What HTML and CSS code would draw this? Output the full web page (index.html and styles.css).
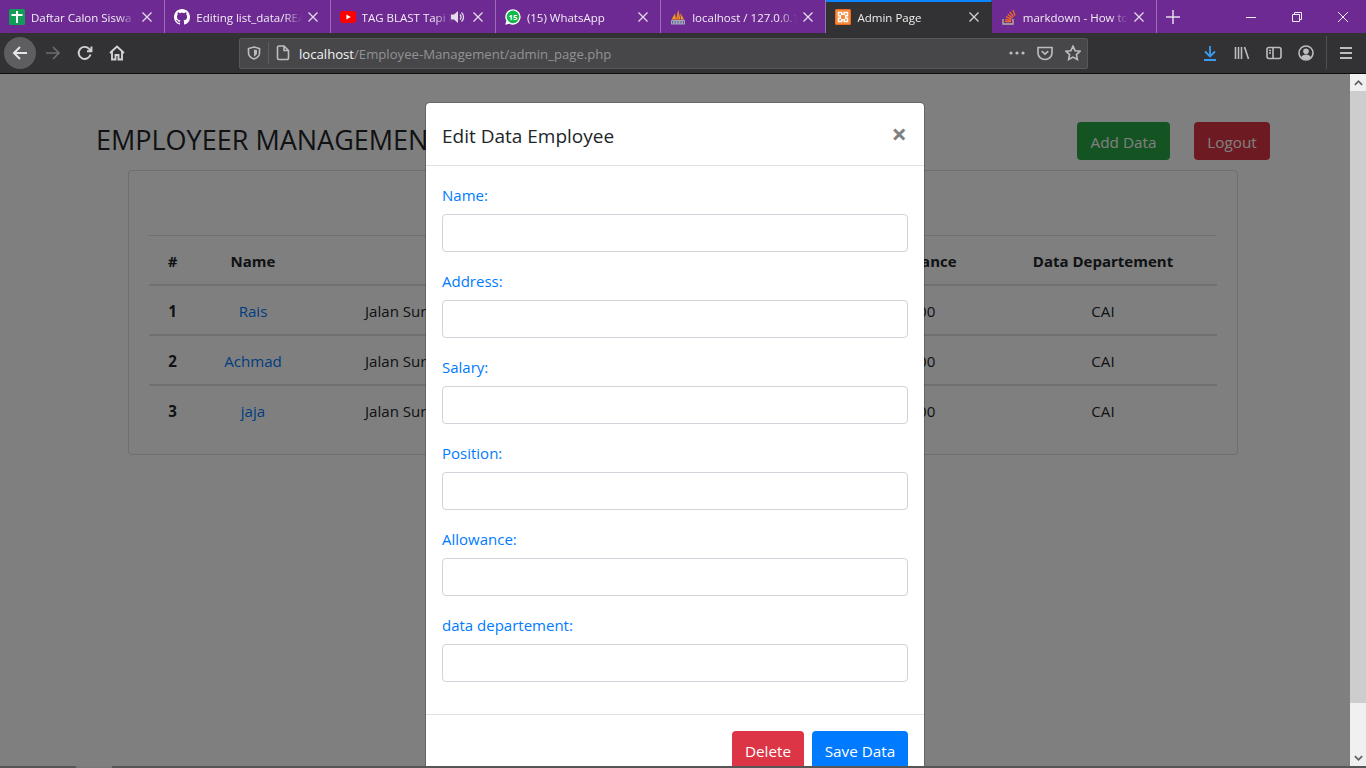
FILE: index.html
```html
<!DOCTYPE html>
<html lang="en">
<head>
<meta charset="utf-8">
<title>Admin Page</title>
<link rel="stylesheet" href="styles.css">
</head>
<body>
<div class="window">
  <div class="tabbar">
    <div class="tab">
      <svg class="fav" viewBox="0 0 16 16"><rect width="16" height="16" rx="1.5" fill="#0f9d58"/><path d="M2.500 5h11v2H9v7H7V7H2.500zM7 2h2v3H7z" fill="#fff"/></svg>
      <span class="title">Daftar Calon Siswa Man</span>
      <svg class="close" viewBox="0 0 10 10"><path d="M.5.5l9 9M9.5.5l-9 9"/></svg>
    </div>
    <div class="tab">
      <svg class="fav" viewBox="0 0 16 16"><path fill="#fff" d="M8 0C3.58 0 0 3.58 0 8c0 3.54 2.29 6.53 5.47 7.59.4.07.55-.17.55-.38v-1.49c-2.01.37-2.53-.49-2.69-.94-.09-.23-.48-.94-.82-1.13-.28-.15-.68-.52-.01-.53.63-.01 1.08.58 1.23.82.72 1.21 1.87.87 2.33.66.07-.52.28-.87.51-1.07-1.78-.2-3.64-.89-3.64-3.95 0-.87.31-1.59.82-2.15-.08-.2-.36-1.02.08-2.12 0 0 .67-.21 2.2.82.64-.18 1.32-.27 2-.27s1.36.09 2 .27c1.53-1.04 2.2-.82 2.2-.82.44 1.1.16 1.92.08 2.12.51.56.82 1.27.82 2.15 0 3.07-1.87 3.75-3.65 3.95.29.25.54.73.54 1.48v2.2c0 .21.15.46.55.38A8.01 8.01 0 0 0 16 8c0-4.42-3.58-8-8-8z"/></svg>
      <span class="title">Editing list_data/README</span>
      <svg class="close" viewBox="0 0 10 10"><path d="M.5.5l9 9M9.5.5l-9 9"/></svg>
    </div>
    <div class="tab">
      <svg class="fav" viewBox="0 0 16 16"><rect y="2" width="16" height="12" rx="3" fill="#f00"/><path d="M6.4 5.4v5.2L10.8 8z" fill="#fff"/></svg>
      <span class="title">TAG BLAST Tapi Lagu</span>
      <svg class="sound" viewBox="0 0 14 14"><path d="M0 4.5h3L7 1v12L3 9.5H0z" fill="#e4dcea"/><path d="M9 4.5a3.5 3.5 0 0 1 0 5M10.5 2.5a6 6 0 0 1 0 9" fill="none" stroke="#e4dcea" stroke-width="1.3"/></svg>
      <svg class="close" viewBox="0 0 10 10"><path d="M.5.5l9 9M9.5.5l-9 9"/></svg>
    </div>
    <div class="tab">
      <svg class="fav" viewBox="0 0 16 16"><path d="M8 .2a7.700 7.700 0 0 0-6.600 11.600L.2 15.800l4.100-1.100A7.700 7.700 0 1 0 8 .2z" fill="#fff"/><circle cx="8" cy="7.900" r="6.300" fill="#12b84a"/><text x="8" y="10.500" class="wa">15</text></svg>
      <span class="title">(15) WhatsApp</span>
      <svg class="close" viewBox="0 0 10 10"><path d="M.5.5l9 9M9.5.5l-9 9"/></svg>
    </div>
    <div class="tab">
      <svg class="fav" viewBox="0 0 16 16"><path d="M1.500 10.500L5 4.500l1 6zM6 10.500L8.200 1l2.300 9.500zM11 10.500l-.8-6.500 4 6.500z" fill="#f59a1d"/><path d="M8.200 3.500l.9 7H7.400z" fill="#d8641a"/><rect x="1" y="11" width="14" height="4.500" rx=".5" fill="#a3a6c0"/><path d="M2.500 12v2.500M5 12v2.500M8 12v2.500M11 12v2.500M13.500 12v2.500" stroke="#5d5f80" stroke-width="1"/></svg>
      <span class="title">localhost / 127.0.0.1 / db</span>
      <svg class="close" viewBox="0 0 10 10"><path d="M.5.5l9 9M9.5.5l-9 9"/></svg>
    </div>
    <div class="tab tab-active">
      <svg class="fav" viewBox="0 0 16 16"><rect width="16" height="16" rx="1.500" fill="#ef6c1e"/><rect x="1" y="1" width="14" height="14" fill="#f58a3c"/><path d="M3.500 3.500h3.200v1.800h2.600V3.500h3.200v3.200H10.700v2.600h1.800v3.200H9.300v-1.800H6.700v1.800H3.500V9.300h1.800V6.700H3.500z" fill="none" stroke="#fff" stroke-width="1.500"/></svg>
      <span class="title">Admin Page</span>
      <svg class="close" viewBox="0 0 10 10"><path d="M.5.5l9 9M9.500.5l-9 9"/></svg>
    </div>
    <div class="tab">
      <svg class="fav" viewBox="0 0 16 16"><path d="M2 10v5h10v-5" fill="none" stroke="#b5b5a8" stroke-width="1.300"/><path d="M4 12.500h6M4.200 10.300l5.900 1.100M5 7.700l5.500 2.500M6.700 5.200l4.700 3.900M9 3l3.500 4.900M12 1l2 5.800" fill="none" stroke="#ef6a21" stroke-width="1.300"/></svg>
      <span class="title">markdown - How to</span>
      <svg class="close" viewBox="0 0 10 10"><path d="M.5.5l9 9M9.5.5l-9 9"/></svg>
    </div>
    <svg class="newtab" viewBox="0 0 14 14"><path d="M7 0v14M0 7h14"/></svg>
    <div class="winctl">
      <div class="winbtn"><svg viewBox="0 0 10 10"><path d="M0 5.500h10"/></svg></div>
      <div class="winbtn"><svg viewBox="0 0 10 10"><path d="M.5 2.500h7v7h-7zM2.500 2.500v-2h7v7h-2"/></svg></div>
      <div class="winbtn"><svg viewBox="0 0 10 10"><path d="M0 0l10 10M10 0L0 10"/></svg></div>
    </div>
  </div>

  <div class="toolbar">
    <div class="backbtn"><svg class="ico" viewBox="0 0 16 16"><path class="line-strong" d="M15 8H2M8 2L2 8l6 6"/></svg></div>
    <div class="tbtn"><svg class="ico" viewBox="0 0 16 16"><path class="line-dim" d="M1 8h13M8 2l6 6-6 6"/></svg></div>
    <div class="tbtn"><svg class="ico" viewBox="0 0 16 16"><path class="line-bold" d="M13.500 9.500A6 6 0 1 1 12 3.700L14 6M14.500 1.500V6.300H10"/></svg></div>
    <div class="tbtn"><svg class="ico" viewBox="0 0 16 16"><path class="line-bold" d="M1 8l7-6.500L15 8M3 6.500V14.500h3.500V10h3v4.500H13V6.500"/></svg></div>
    <div class="urlbar">
      <svg class="ico-sm" viewBox="0 0 14 14"><path class="line" d="M7 1l5.500 1.500V7c0 3-2.500 5-5.500 6-3-1-5.500-3-5.500-6V2.500z"/><path d="M7 3.500l3 .8V7c0 1.500-1.300 2.800-3 3.500z" fill="#bdbdbf"/></svg>
      <span class="urlsep"></span>
      <svg class="ico-page" viewBox="0 0 14 16"><path class="line" d="M1.500 2.500a1.500 1.500 0 0 1 1.500-1.500h5l4.500 4.500V13a1.500 1.500 0 0 1-1.500 1.500H3A1.500 1.500 0 0 1 1.500 13zM8 1v4.500h4.500"/></svg>
      <span class="url"><span class="url-host">localhost</span>/Employee-Management/admin_page.php</span>
      <svg class="dots" viewBox="0 0 16 4"><circle cx="2" cy="2" r="1.600"/><circle cx="8" cy="2" r="1.600"/><circle cx="14" cy="2" r="1.600"/></svg>
      <svg class="ico pocket" viewBox="0 0 16 16"><path class="line" d="M1 2.500h14V8a7 6.500 0 0 1-14 0z"/><path class="line" d="M4.800 6.200L8 9.200l3.200-3"/></svg>
      <svg class="ico star" viewBox="0 0 16 16"><path class="line" d="M8 1.200l2.100 4.500 4.900.6-3.600 3.300 1 4.900L8 12.100l-4.400 2.400 1-4.900L1 6.300l4.900-.6z"/></svg>
    </div>
    <div class="tbtn tbtn-first"><svg class="ico" viewBox="0 0 16 16"><path class="line-blue" d="M8 1v10M3 6.500L8 11.500l5-5M2 15h12"/></svg></div>
    <div class="tbtn"><svg class="ico" viewBox="0 0 16 16"><path class="line" d="M1.500 2v12M4.500 2v12M7.500 2v12M10.500 2l4 12"/></svg></div>
    <div class="tbtn"><svg class="ico" viewBox="0 0 16 16"><rect class="line" x="1" y="2.500" width="14" height="11" rx="2"/><path class="line" d="M7 2.500v11M3 5.500h2M3 8h2"/></svg></div>
    <div class="tbtn"><svg class="ico" viewBox="0 0 16 16"><circle class="line" cx="8" cy="8" r="7"/><circle cx="8" cy="6.300" r="2.800" fill="#bdbdbf"/><path d="M3 12.500c1-2.300 3-3 5-3s4 .7 5 3a7 7 0 0 1-10 0z" fill="#bdbdbf"/></svg></div>
    <span class="toolsep"></span>
    <div class="tbtn"><svg class="ico" viewBox="0 0 16 16"><path class="line-thick" d="M2 3h12M2 8h12M2 13h12"/></svg></div>
  </div>

  <div class="viewport">
    <div class="page">
      <div class="head">
        <h1 class="heading">EMPLOYEER MANAGEMENT</h1>
        <a class="btn btn-green">Add Data</a>
        <a class="btn btn-red">Logout</a>
      </div>
      <div class="card">
        <table class="table">
          <colgroup>
            <col class="c1"><col class="c2"><col class="c3"><col class="c4"><col class="c5"><col class="c6"><col class="c7">
          </colgroup>
          <thead>
            <tr><th>#</th><th>Name</th><th>Address</th><th>Salary</th><th>Position</th><th>Allowance</th><th>Data Departement</th></tr>
          </thead>
          <tbody>
            <tr><th>1</th><td><a class="link">Rais</a></td><td class="addr">Jalan Surabaya</td><td>5000000</td><td>Staff</td><td>1000</td><td>CAI</td></tr>
            <tr><th>2</th><td><a class="link">Achmad</a></td><td class="addr">Jalan Surabaya</td><td>5000000</td><td>Staff</td><td>1000</td><td>CAI</td></tr>
            <tr><th>3</th><td><a class="link">jaja</a></td><td class="addr">Jalan Surabaya</td><td>5000000</td><td>Staff</td><td>1000</td><td>CAI</td></tr>
          </tbody>
        </table>
      </div>
    </div>
    <div class="scrollbar">
      <svg class="sb-arrow" viewBox="0 0 10 6"><path d="M1 5l4-4 4 4"/></svg>
      <div class="sb-thumb"></div>
      <svg class="sb-arrow" viewBox="0 0 10 6"><path d="M1 1l4 4 4-4"/></svg>
    </div>
    <div class="backdrop"></div>
    <div class="modal">
      <div class="modal-head">
        <h4 class="modal-title">Edit Data Employee</h4>
        <span class="modal-x">×</span>
      </div>
      <form class="modal-body">
        <div class="group"><label class="lbl">Name:</label><input class="field" type="text"></div>
        <div class="group"><label class="lbl">Address:</label><input class="field" type="text"></div>
        <div class="group"><label class="lbl">Salary:</label><input class="field" type="text"></div>
        <div class="group"><label class="lbl">Position:</label><input class="field" type="text"></div>
        <div class="group"><label class="lbl">Allowance:</label><input class="field" type="text"></div>
        <div class="group"><label class="lbl">data departement:</label><input class="field" type="text"></div>
      </form>
      <div class="modal-foot">
        <a class="btn btn-red">Delete</a>
        <a class="btn btn-blue">Save Data</a>
      </div>
    </div>
  </div>
  <div class="strip"><span class="strip-seg"></span></div>
</div>
</body>
</html>
```
FILE: styles.css
```css
* { box-sizing: border-box; }
html, body { margin: 0; height: 100%; overflow: hidden; }
body { font-family: "Open Sans", "Noto Sans", sans-serif; font-size: 15px; color: #212529; background: #fff; }
.window { width: 1366px; height: 768px; display: flex; flex-direction: column; overflow: hidden; }

/* tabs */
.tabbar { height: 33px; flex: none; display: flex; align-items: stretch; background: #6d2a92; }
.tab { width: 165.3px; flex: none; display: flex; align-items: center; padding: 1px 12px 0 9px; border-right: 1px solid #9b6cb6; color: #f1ecf5; font-size: 11.5px; }
.tab-active { background: #323234; border-right-color: #323234; border-top: 2px solid #0a84ff; padding-top: 0; padding-bottom: 1px; color: #eee; }
.fav { width: 16px; height: 16px; flex: none; margin-right: 6px; }
.title { flex: 1; min-width: 0; overflow: hidden; white-space: nowrap; -webkit-mask-image: linear-gradient(to left, transparent 0, #000 18px); mask-image: linear-gradient(to left, transparent 0, #000 18px); }
.close { width: 10px; height: 10px; flex: none; margin-left: 6px; fill: none; stroke: #e4dcea; stroke-width: 1.3; }
.tab-active .close { stroke: #d4d4d6; }
.sound { width: 14px; height: 14px; flex: none; margin-left: -1px; margin-right: 2px; }
.wa { font-family: "Open Sans", sans-serif; font-size: 7.800px; font-weight: 700; fill: #fff; text-anchor: middle; }
.newtab { width: 14px; height: 14px; margin: auto 0 auto 9px; fill: none; stroke: #e4dcea; stroke-width: 1.500; }
.winctl { margin-left: auto; display: flex; }
.winbtn { width: 46px; display: flex; align-items: center; justify-content: center; }
.winbtn svg { width: 10px; height: 10px; fill: none; stroke: #f1ecf5; stroke-width: 1; }

/* toolbar */
.toolbar { height: 41px; flex: none; display: flex; align-items: center; padding: 0 0 1px 4px; background: #323234; border-bottom: 1px solid #0c0c0d; }
.backbtn { width: 32px; height: 32px; border-radius: 50%; background: #5e5e60; display: flex; align-items: center; justify-content: center; }
.tbtn { width: 32px; height: 32px; margin-left: 0; display: flex; align-items: center; justify-content: center; flex: none; }
.backbtn + .tbtn { margin-left: 1px; }
.tbtn-first { margin-left: 106px; }
.ico { width: 16px; height: 16px; flex: none; }
.line, .line-strong, .line-dim, .line-blue, .line-thick, .line-bold { fill: none; stroke: #bdbdbf; stroke-width: 1.600; }
.line-bold { stroke: #d2d2d4; stroke-width: 1.900; }
.line-strong { stroke: #e6e6e6; stroke-width: 2; }
.line-dim { stroke: #6e6e70; stroke-width: 1.600; }
.line-blue { stroke: #3a9bf0; stroke-width: 1.800; }
.line-thick { stroke-width: 2; }
.urlbar { width: 849px; height: 31px; margin-left: 106px; margin-top: 1px; flex: none; display: flex; align-items: center; padding: 0 6px 0 7px; background: #474749; border: 1px solid #58585a; border-radius: 2px; font-size: 13.150px; color: #929294; }
.ico-sm { width: 14px; height: 14px; flex: none; }
.urlsep { width: 1px; height: 22px; background: #5c5c5e; margin: 0 7px; flex: none; }
.ico-page { width: 14px; height: 16px; flex: none; margin-right: 9px; }
.url { flex: 1; white-space: nowrap; padding-top: 2px; }
.url-host { color: #f4f4f4; }
.dots { width: 16px; height: 4px; fill: #bdbdbf; flex: none; }
.pocket { margin-left: 12px; }
.star { margin-left: 12px; }
.toolsep { width: 1px; height: 33px; background: #4f4f51; margin: 0 3px 0 4px; flex: none; }

/* page */
.viewport { position: relative; flex: 1; min-height: 0; display: flex; overflow: hidden; background: #fff; }
.page { flex: 1; min-width: 0; padding: 48px 80px 0 96px; }
.head { display: flex; align-items: flex-start; height: 48px; }
.heading { margin: 0 auto 0 0; font-size: 27px; font-weight: 400; line-height: 36px; color: #212529; white-space: nowrap; }
.btn { display: block; height: 38px; padding: 0 14px; line-height: 40px; border-radius: 4px; color: #fff; font-size: 15.300px; text-align: center; white-space: nowrap; }
.btn-green { background: #28a745; width: 93px; padding: 0; margin-right: 24px; }
.btn-red { background: #dc3545; }
.head .btn-red { width: 76px; padding: 0; }
.btn-blue { background: #007bff; width: 96px; padding: 0; }
.card { margin-left: 32px; width: 1110px; height: 285px; padding: 64px 20px 0; border: 1px solid #d8dce0; border-radius: 4px; }
.table { width: 1068px; border-collapse: separate; border-spacing: 0; table-layout: fixed; }
.c1 { width: 47px; } .c2 { width: 114px; } .c3 { width: 340px; } .c4 { width: 100px; } .c5 { width: 97px; } .c6 { width: 142px; } .c7 { width: 228px; }
.table th, .table td { padding: 2px 12px 0; height: 50px; text-align: center; border-bottom: 2px solid #dee2e6; font-size: 15.100px; }
.table thead th { height: 51px; padding-top: 1px; border-top: 1px solid #dee2e6; font-size: 15px; font-weight: 700; }
.table tbody th { font-weight: 700; }
.table tbody tr:last-child th, .table tbody tr:last-child td { border-bottom-color: transparent; }
.table .addr { text-align: left; padding-left: 55px; white-space: nowrap; }
.link { color: #007bff; }

/* scrollbar */
.scrollbar { width: 16px; flex: none; display: flex; flex-direction: column; align-items: center; padding-top: 1px; background: #f0f0f0; position: relative; z-index: 3; }
.sb-arrow { width: 9px; height: 16px; flex: none; fill: none; stroke: #606060; stroke-width: 2; }
.sb-thumb { width: 16px; flex: 1; background: #cdcdcd; margin-bottom: 47px; }

/* modal */
.backdrop { position: absolute; inset: 0 16px 0 0; background: rgba(0, 0, 0, .5); }
.modal { position: absolute; left: 425px; top: 28px; width: 500px; height: 681px; background: #fff; background-clip: padding-box; border: 1px solid rgba(0, 0, 0, .2); border-radius: 5px; }
.modal-head { height: 63px; padding: 0 16px; display: flex; align-items: center; justify-content: space-between; border-bottom: 1px solid #dee2e6; }
.modal-title { margin: 3px 0 0; font-size: 19px; font-weight: 400; color: #212529; }
.modal-x { font-size: 27px; font-weight: 700; line-height: 1; color: #808080; margin-top: -2px; margin-right: 1px; }
.modal-body { padding: 16px 16px 0; height: 548px; }
.group { margin-bottom: 16px; }
.lbl { display: block; height: 24px; line-height: 26px; margin-bottom: 8px; color: #007bff; font-size: 15px; }
.field { display: block; width: 100%; height: 38px; padding: 6px 12px; background: #fff; border: 1px solid #ced4da; border-radius: 4px; }
.modal-foot { display: flex; justify-content: flex-end; gap: 8px; padding: 16px; border-top: 1px solid #dee2e6; }
.modal-foot .btn { padding: 0 14px; }
.modal-foot .btn-red { width: 72px; padding: 0; }
.modal-foot .btn-blue { width: 96px; padding: 0; }

.strip { height: 2px; flex: none; background: #565656; display: flex; }
.strip-seg { width: 36px; margin-left: 76px; background: #7a7a7a; }
```
